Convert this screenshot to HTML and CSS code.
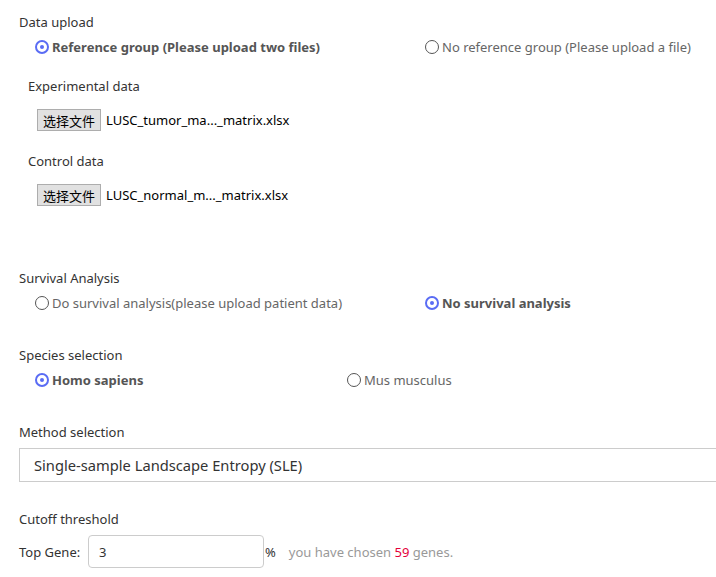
FILE: index.html
```html
<!DOCTYPE html>
<html lang="en">
<head>
    <meta charset="UTF-8">
    <meta name="viewport" content="width=device-width, initial-scale=1.0">
    <title>Analysis Settings</title>
    <link rel="stylesheet" href="styles.css">
</head>
<body>
    <div class="page">
        <div class="section">
            <div class="title">Data upload</div>
            <div class="radio-row">
                <label class="radio wide checked"><span class="dot"></span>Reference group (Please upload two files)</label>
                <label class="radio"><span class="dot"></span>No reference group (Please upload a file)</label>
            </div>
            <div class="sub-title first">Experimental data</div>
            <div class="file-row">
                <button type="button" class="file-btn">选择文件</button>
                <span class="file-name">LUSC_tumor_ma..._matrix.xlsx</span>
            </div>
            <div class="sub-title">Control data</div>
            <div class="file-row">
                <button type="button" class="file-btn">选择文件</button>
                <span class="file-name">LUSC_normal_m..._matrix.xlsx</span>
            </div>
        </div>

        <div class="section survival">
            <div class="title">Survival Analysis</div>
            <div class="radio-row">
                <label class="radio wide"><span class="dot"></span>Do survival analysis(please upload patient data)</label>
                <label class="radio checked"><span class="dot"></span>No survival analysis</label>
            </div>
        </div>

        <div class="section">
            <div class="title">Species selection</div>
            <div class="radio-row">
                <label class="radio narrow checked"><span class="dot"></span>Homo sapiens</label>
                <label class="radio"><span class="dot"></span>Mus musculus</label>
            </div>
        </div>

        <div class="section method">
            <div class="title">Method selection</div>
            <div class="select-box">Single-sample Landscape Entropy (SLE)</div>
        </div>

        <div class="section">
            <div class="title">Cutoff threshold</div>
            <div class="cutoff-row">
                <span class="cutoff-label">Top Gene:</span>
                <input type="text" class="cutoff-input" value="3">
                <span class="percent">%</span>
                <span class="hint">you have chosen <span class="count">59</span> genes.</span>
            </div>
        </div>
    </div>
</body>
</html>
```

FILE: styles.css
```css
body { margin: 0; background: #fff; font-family: "Noto Sans", "Noto Sans CJK SC", sans-serif; font-size: 13px; color: #333; overflow: hidden; }
.page { padding: 12px 0 0 19px; }
.section { margin-bottom: 32px; }
.section.survival { margin-top: 62px; }
.section.method { margin-bottom: 27px; }
.title { line-height: 20px; color: #333; }
.radio-row { display: flex; margin-top: 5px; padding-left: 16px; line-height: 20px; }
.radio { display: flex; align-items: center; color: #666; }
.radio.wide { width: 390px; }
.radio.narrow { width: 312px; }
.radio .dot { width: 14px; height: 14px; border: 1px solid #555; border-radius: 50%; margin-right: 3px; box-sizing: border-box; }
.radio.checked { font-weight: bold; color: #555; }
.radio.checked .dot { border: 2px solid #5a6cf4; position: relative; }
.radio.checked .dot::after { content: ""; position: absolute; left: 3px; top: 3px; width: 4px; height: 4px; border-radius: 50%; background: #5a6cf4; }
.sub-title { line-height: 20px; margin: 20px 0 0 9px; }
.sub-title.first { margin-top: 19px; }
.file-row { display: flex; align-items: center; margin: 13px 0 0 18px; height: 22px; }
.file-btn { height: 22px; padding: 0 5px; border: 1px solid #adadad; background: #e1e1e1; font: 13px "Noto Sans CJK SC", sans-serif; color: #000; border-radius: 0; }
.file-name { margin-left: 5px; color: #000; }
.select-box { margin-top: 6px; height: 34px; border: 1px solid #ccc; border-right: 0; box-sizing: border-box; padding-left: 14px; line-height: 32px; font-size: 14.7px; color: #333; }
.cutoff-row { display: flex; align-items: center; margin-top: 6px; }
.cutoff-label { width: 69px; }
.cutoff-input { width: 176px; height: 33px; box-sizing: border-box; border: 1px solid #ccc; border-radius: 4px; padding: 0 10px; font: 13px "Noto Sans", sans-serif; color: #333; }
.percent { margin-left: 1px; }
.hint { margin-left: 13px; color: #999; }
.hint .count { color: #e4003a; }
```
